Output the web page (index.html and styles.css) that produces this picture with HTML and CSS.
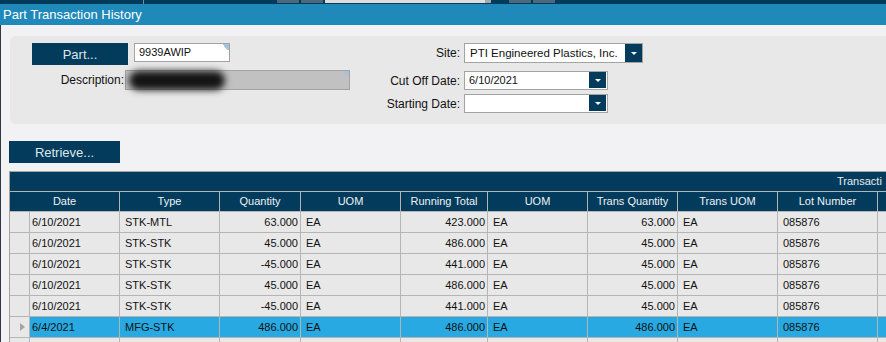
FILE: index.html
```html
<!DOCTYPE html>
<html>
<head>
<title>Part Transaction History</title>
<link rel="stylesheet" href="styles.css">
</head>
<body>
<div class="topstrip">
  <span class="ts-line"></span>
  <span class="ts-btn first"></span>
  <span class="ts-btn"></span>
  <span class="ts-field"></span>
  <span class="ts-btn wide"></span>
  <span class="ts-btn"></span>
</div>
<div class="titlebar">Part Transaction History</div>
<div class="main">
  <div class="panel">
    <div class="left">
      <div class="row">
        <div class="btn part-btn">Part...</div>
        <div class="input part-input">9939AWIP</div>
      </div>
      <div class="row desc-row">
        <span class="label desc-label">Description:</span>
        <div class="input desc"><span class="redact"></span></div>
      </div>
    </div>
    <div class="right">
      <div class="frow site-row">
        <span class="label flabel">Site:</span>
        <div class="combo site">
          <span class="combo-text">PTI Engineered Plastics, Inc.</span>
          <span class="drop"><i class="arrow"></i></span>
        </div>
      </div>
      <div class="frow cut-row">
        <span class="label flabel">Cut Off Date:</span>
        <div class="combo date">
          <span class="combo-text">6/10/2021</span>
          <span class="drop"><i class="arrow"></i></span>
        </div>
      </div>
      <div class="frow start-row">
        <span class="label flabel">Starting Date:</span>
        <div class="combo date">
          <span class="combo-text"></span>
          <span class="drop"><i class="arrow"></i></span>
        </div>
      </div>
    </div>
  </div>

  <div class="btn retrieve">Retrieve...</div>

  <div class="grid">
    <div class="group"><span>Transacti</span></div>
    <div class="gr head">
      <span class="c span2">Date</span>
      <span class="c">Type</span>
      <span class="c">Quantity</span>
      <span class="c">UOM</span>
      <span class="c">Running Total</span>
      <span class="c">UOM</span>
      <span class="c">Trans Quantity</span>
      <span class="c">Trans UOM</span>
      <span class="c">Lot Number</span>
      <span class="c"></span>
    </div>
    <div class="gr">
      <span class="c ind"></span><span class="c date">6/10/2021</span><span class="c">STK-MTL</span><span class="c num">63.000</span><span class="c">EA</span><span class="c num">423.000</span><span class="c">EA</span><span class="c num">63.000</span><span class="c">EA</span><span class="c">085876</span><span class="c"></span>
    </div>
    <div class="gr">
      <span class="c ind"></span><span class="c date">6/10/2021</span><span class="c">STK-STK</span><span class="c num">45.000</span><span class="c">EA</span><span class="c num">486.000</span><span class="c">EA</span><span class="c num">45.000</span><span class="c">EA</span><span class="c">085876</span><span class="c"></span>
    </div>
    <div class="gr">
      <span class="c ind"></span><span class="c date">6/10/2021</span><span class="c">STK-STK</span><span class="c num">-45.000</span><span class="c">EA</span><span class="c num">441.000</span><span class="c">EA</span><span class="c num">45.000</span><span class="c">EA</span><span class="c">085876</span><span class="c"></span>
    </div>
    <div class="gr">
      <span class="c ind"></span><span class="c date">6/10/2021</span><span class="c">STK-STK</span><span class="c num">45.000</span><span class="c">EA</span><span class="c num">486.000</span><span class="c">EA</span><span class="c num">45.000</span><span class="c">EA</span><span class="c">085876</span><span class="c"></span>
    </div>
    <div class="gr">
      <span class="c ind"></span><span class="c date">6/10/2021</span><span class="c">STK-STK</span><span class="c num">-45.000</span><span class="c">EA</span><span class="c num">441.000</span><span class="c">EA</span><span class="c num">45.000</span><span class="c">EA</span><span class="c">085876</span><span class="c"></span>
    </div>
    <div class="gr sel">
      <span class="c ind"><i class="tri"></i></span><span class="c date">6/4/2021</span><span class="c">MFG-STK</span><span class="c num">486.000</span><span class="c">EA</span><span class="c num">486.000</span><span class="c">EA</span><span class="c num">486.000</span><span class="c">EA</span><span class="c">085876</span><span class="c"></span>
    </div>
    <div class="gr">
      <span class="c ind"></span><span class="c date"></span><span class="c"></span><span class="c"></span><span class="c"></span><span class="c"></span><span class="c"></span><span class="c"></span><span class="c"></span><span class="c"></span><span class="c"></span>
    </div>
  </div>
</div>
</body>
</html>
```

FILE: styles.css
```css
* { box-sizing: border-box; }
body { margin: 0; width: 886px; height: 342px; overflow: hidden;
       background: #f2f2f4; font-family: "Liberation Sans", Arial, sans-serif; color: #111; }

/* top window strip */
.topstrip { display: flex; height: 4px; background: #003b5c; }
.topstrip span { display: block; height: 3px; }
.ts-line { width: 1px; margin-left: 143px; height: 4px !important; background: #7c8c9a; }
.ts-btn { width: 22px; margin-right: 2px; background: #4d677b; }
.ts-btn.first { margin-left: 133px; }
.ts-btn.wide { margin-left: 18px; width: 22px; }
.ts-field { width: 166px; background: #dedede; border-right: 6px solid #a9a9a9; }

.titlebar { height: 21px; line-height: 21px; background: #1f89b9; color: #fff;
            font-size: 13px; padding-left: 3px; }

.main { border-left: 1px solid #2f3a44; padding-top: 11px; height: 317px; }

/* form panel */
.panel { display: flex; margin-left: 9px; height: 88px; padding-top: 7px;
         background: #e8e8e8; border-radius: 6px 0 0 6px; }
.left { width: 340px; }
.row { display: flex; align-items: flex-start; }
.desc-row { margin-top: 5px; }

.btn { display: flex; align-items: center; justify-content: center;
       background: #023b5b; color: #dfe6ec; font-size: 13px; }
.part-btn { width: 96px; height: 22px; margin-left: 22px; }

.input { height: 19px; border: 1px solid #a3a3a3; background: #fff; font-size: 11px;
         line-height: 17px; padding-left: 4px;
         background-image: linear-gradient(to bottom left, #a9c2dc 50%, transparent 50%);
         background-repeat: no-repeat; background-position: top right; background-size: 7px 7px; }
.part-input { width: 96px; margin-left: 6px; }
.desc { width: 225px; height: 20px; margin-left: 1px; background-color: #c1c1c1;
        display: flex; align-items: center; padding-left: 3px; }
.redact { display: block; width: 96px; height: 19px; background: #141414;
          border-radius: 10px; filter: blur(3.5px); }

.label { font-size: 12px; color: #111; }
.desc-label { width: 114px; text-align: right; line-height: 20px; }

.frow { display: flex; align-items: center; }
.flabel { width: 110px; text-align: right; margin-right: 4px; }
.cut-row { margin-top: 8px; }
.start-row { margin-top: 4px; }

.combo { display: flex; height: 19px; border: 1px solid #a3a3a3; background: #fff; }
.combo.site { width: 179px; height: 20px; }
.combo.date { width: 144px; }
.combo-text { flex: 1; font-size: 11px; line-height: 17px; padding-left: 4px; white-space: nowrap; overflow: hidden; }
.site .combo-text { font-size: 11.5px; padding-left: 5px; line-height: 18px; }
.drop { width: 17px; background: #023b5b; display: flex; align-items: center; justify-content: center; }
.date .drop { margin: 0 1px 1px 0; }
.arrow { display: block; width: 0; height: 0; border-left: 3px solid transparent;
         border-right: 3px solid transparent; border-top: 3px solid #fff; }

.retrieve { width: 111px; height: 22px; margin: 17px 0 0 8px; }

/* data grid */
.grid { margin: 8px 0 0 8px; border-top: 1px solid #a3a3a3; border-left: 1px solid #a3a3a3;
        width: 1000px; font-size: 11px; }
.group { height: 20px; background: #023b5b; color: #e6ecf1; line-height: 19px;
         border-bottom: 1px solid #b5b5b5; padding-left: 827px; white-space: nowrap; }
.gr { display: grid; height: 21px;
      grid-template-columns: 20px 90px 100px 81px 100px 87px 100px 90px 100px 100px 100px; }
.gr .c { border-right: 1px solid #b5b5b5; border-bottom: 1px solid #b5b5b5;
         background: #e8e8e8; padding-left: 5px; line-height: 20px; white-space: nowrap; overflow: hidden; }
.gr .date { padding-left: 2px; }
.gr .num { text-align: right; padding-left: 0; padding-right: 2px; }
.head { height: 20px; }
.head .c { background: #023b5b; color: #eef2f5; text-align: center; padding-left: 0; line-height: 19px; }
.head .span2 { grid-column: span 2; }
.sel .c { background: #29a9e1; }
.sel .ind { background: #e8e8e8; display: flex; align-items: center; justify-content: center; }
.tri { display: block; width: 0; height: 0; border-top: 4px solid transparent;
       border-bottom: 4px solid transparent; border-left: 5px solid #a4a4a4; }
```
